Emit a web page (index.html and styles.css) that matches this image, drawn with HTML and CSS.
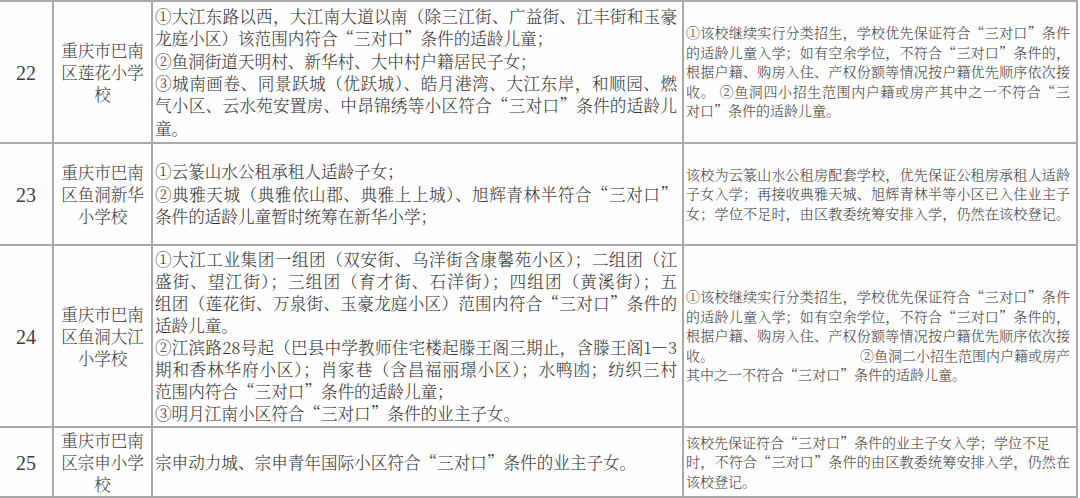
FILE: index.html
```html
<!DOCTYPE html>
<html lang="zh-CN">
<head>
<meta charset="utf-8">
<title>招生范围</title>
<link rel="stylesheet" href="styles.css">
</head>
<body>
<div class="sheet">
  <div class="cell num">22</div>
  <div class="cell name">重庆市巴南区莲花小学校</div>
  <div class="cell scope">
    <div class="ln j">①大江东路以西，大江南大道以南（除三江街、广益街、江丰街和玉豪</div>
    <div class="ln">龙庭小区）该范围内符合“三对口”条件的适龄儿童；</div>
    <div class="ln">②鱼洞街道天明村、新华村、大中村户籍居民子女；</div>
    <div class="ln j">③城南画卷、同景跃城（优跃城）、皓月港湾、大江东岸，和顺园、燃</div>
    <div class="ln j">气小区、云水苑安置房、中昂锦绣等小区符合“三对口”条件的适龄儿</div>
    <div class="ln">童。</div>
  </div>
  <div class="cell note">
    <div class="ln j">①该校继续实行分类招生，学校优先保证符合“三对口”条件</div>
    <div class="ln j">的适龄儿童入学；如有空余学位，不符合“三对口”条件的，</div>
    <div class="ln j">根据户籍、购房入住、产权份额等情况按户籍优先顺序依次接</div>
    <div class="ln j">收。 ②鱼洞四小招生范围内户籍或房产其中之一不符合“三</div>
    <div class="ln">对口”条件的适龄儿童。</div>
  </div>

  <div class="cell num">23</div>
  <div class="cell name">重庆市巴南区鱼洞新华小学校</div>
  <div class="cell scope">
    <div class="ln">①云篆山水公租承租人适龄子女；</div>
    <div class="ln j">②典雅天城（典雅依山郡、典雅上上城）、旭辉青林半符合“三对口”</div>
    <div class="ln">条件的适龄儿童暂时统筹在新华小学；</div>
  </div>
  <div class="cell note">
    <div class="ln j">该校为云篆山水公租房配套学校，优先保证公租房承租人适龄</div>
    <div class="ln j">子女入学；再接收典雅天城、旭辉青林半等小区已入住业主子</div>
    <div class="ln j">女；学位不足时，由区教委统筹安排入学，仍然在该校登记。</div>
  </div>

  <div class="cell num">24</div>
  <div class="cell name">重庆市巴南区鱼洞大江小学校</div>
  <div class="cell scope tight">
    <div class="ln j">①大江工业集团一组团（双安街、乌洋街含康馨苑小区）；二组团（江</div>
    <div class="ln j">盛街、望江街）；三组团（育才街、石洋街）；四组团（黄溪街）；五</div>
    <div class="ln j">组团（莲花街、万泉街、玉豪龙庭小区）范围内符合“三对口”条件的</div>
    <div class="ln">适龄儿童。</div>
    <div class="ln j">②江滨路28号起（巴县中学教师住宅楼起滕王阁三期止，含滕王阁1—3</div>
    <div class="ln j">期和香林华府小区）；肖家巷（含昌福丽璟小区）；水鸭凼；纺织三村</div>
    <div class="ln">范围内符合“三对口”条件的适龄儿童；</div>
    <div class="ln">③明月江南小区符合“三对口”条件的业主子女。</div>
  </div>
  <div class="cell note">
    <div class="ln j">①该校继续实行分类招生，学校优先保证符合“三对口”条件</div>
    <div class="ln j">的适龄儿童入学；如有空余学位，不符合“三对口”条件的，</div>
    <div class="ln j">根据户籍、购房入住、产权份额等情况按户籍优先顺序依次接</div>
    <div class="ln split"><span>收。</span><span>②鱼洞二小招生范围内户籍或房产</span></div>
    <div class="ln">其中之一不符合“三对口”条件的适龄儿童。</div>
  </div>

  <div class="cell num">25</div>
  <div class="cell name">重庆市巴南区宗申小学校</div>
  <div class="cell scope">
    <div class="ln">宗申动力城、宗申青年国际小区符合“三对口”条件的业主子女。</div>
  </div>
  <div class="cell note">
    <div class="ln">该校先保证符合“三对口”条件的业主子女入学；学位不足</div>
    <div class="ln j">时，不符合“三对口”条件的由区教委统筹安排入学，仍然在</div>
    <div class="ln">该校登记。</div>
  </div>
</div>
</body>
</html>
```

FILE: styles.css
```css
html, body {
  margin: 0;
  padding: 0;
  background: #ffffff;
}

body {
  width: 1080px;
  height: 498px;
  overflow: hidden;
  font-family: "Noto Serif CJK SC", "Noto Sans CJK SC", sans-serif;
  color: #333333;
}

.sheet {
  display: grid;
  grid-template-columns: 52px 97px 529px 392px;
  grid-template-rows: 140px 100px 180px 68px;
  gap: 2px;
  padding: 2px 2px 2px 0;
  width: 1076px;
  background: #a9a9a9;
}

.cell {
  background: #fefefe;
  display: flex;
  flex-direction: column;
  justify-content: center;
  min-width: 0;
}

.num {
  align-items: center;
  font-family: "Liberation Serif", "Noto Sans CJK SC", serif;
  font-size: 20px;
  color: #404040;
  padding-top: 3px;
}

.name {
  text-align: center;
  font-size: 16.5px;
  line-height: 22px;
  padding: 0 4px;
  color: #3a3a3a;
  font-weight: 300;
}

.scope {
  font-size: 16.6px;
  line-height: 22.4px;
  padding: 0 5px 0 2px;
  color: #333333;
  font-weight: 300;
}

.scope.tight {
  line-height: 22px;
}

.note {
  font-size: 14px;
  line-height: 19.4px;
  padding: 0 6px 0 2px;
  color: #3d3d3d;
  font-weight: 300;
}

.ln {
  white-space: nowrap;
  text-align: left;
}

.ln.j {
  text-align: justify;
  text-align-last: justify;
}

.ln.split {
  display: flex;
  justify-content: space-between;
}
```
